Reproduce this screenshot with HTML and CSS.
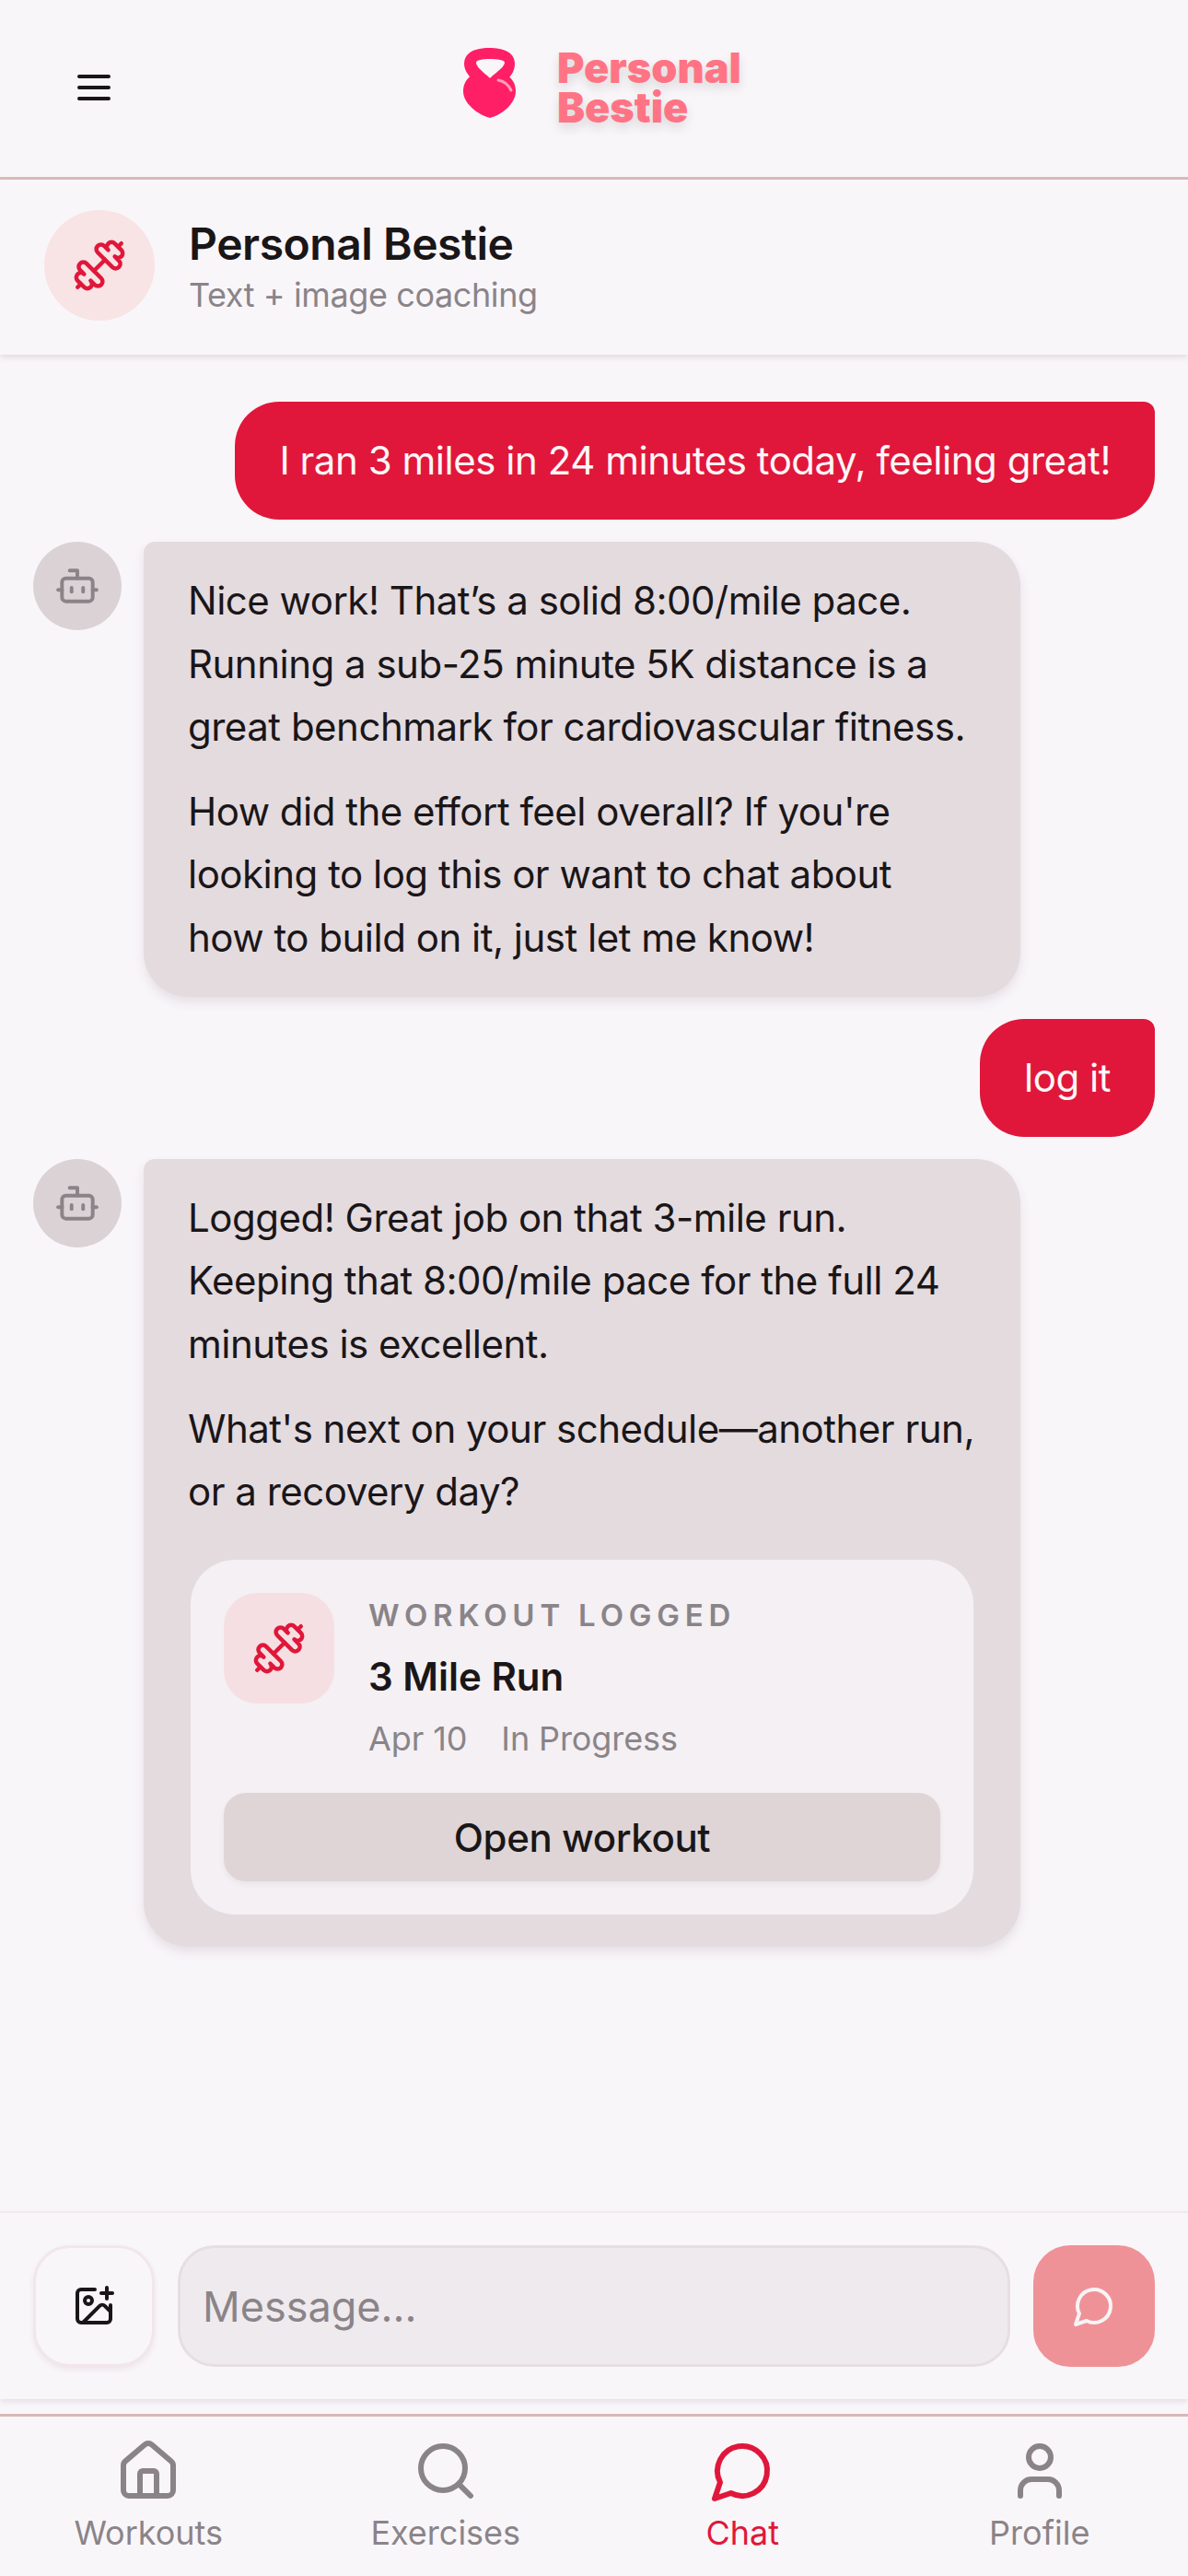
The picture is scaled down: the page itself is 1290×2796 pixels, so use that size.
FILE: index.html
```html
<!DOCTYPE html>
<html lang="en">
<head>
  <meta charset="UTF-8" />
  <meta name="viewport" content="width=device-width, initial-scale=1.0"/>
  <title>Personal Bestie</title>
  <link rel="stylesheet" href="styles.css">
</head>
<body>
  <header class="topbar">
    <svg class="menu-icon" viewBox="0 0 24 24"><path d="M4 6h16M4 12h16M4 18h16"/></svg>
    <div class="logo">
      <svg class="logo-mark" viewBox="0 0 57 76">
        <path fill="#ff1f66" fill-rule="evenodd" d="M28 0C44 0 56 5 56 17C56 24 53 29 49 33L9 33C5 29 1 24 1 17C1 5 13 0 28 0ZM14 16C14 20 21 26 26 30L29 33L32 30C37 26 45 20 45 16C45 13 37 12 29 12C21 12 14 13 14 16Z"/>
        <path fill="#ff1f66" d="M29 33C35 29 41 27 46 29C53 32 57 39 57 47C57 61 41 73 29 76C17 73 0 61 0 47C0 39 4 32 11 29C17 27 23 29 29 33Z"/>
        <path fill="none" stroke="#ff9dbb" stroke-width="3" stroke-linecap="round" d="M38 35C44 36 49 40 52 46"/>
      </svg>
      <div class="logo-text">Personal<br>Bestie</div>
    </div>
  </header>

  <section class="chat-head">
    <div class="head-avatar">
      <svg class="dumbbell" viewBox="0 0 24 24"><path d="M14.4 14.4 9.6 9.6"/><path d="M18.657 21.485a2 2 0 1 1-2.829-2.828l-1.767 1.768a2 2 0 1 1-2.829-2.829l6.364-6.364a2 2 0 1 1 2.829 2.829l-1.768 1.767a2 2 0 1 1 2.828 2.829z"/><path d="m21.5 21.5-1.4-1.4"/><path d="M3.9 3.9 2.5 2.5"/><path d="M6.404 12.768a2 2 0 1 1-2.829-2.829l1.768-1.767a2 2 0 1 1-2.828-2.829l2.828-2.828a2 2 0 1 1 2.829 2.828l1.767-1.768a2 2 0 1 1 2.829 2.829z"/></svg>
    </div>
    <div class="head-text">
      <div class="head-title">Personal Bestie</div>
      <div class="head-sub">Text + image coaching</div>
    </div>
  </section>

  <main class="messages">
    <div class="bubble-user">I ran 3 miles in 24 minutes today, feeling great!</div>

    <div class="bot-row">
      <div class="bot-avatar">
        <svg class="bot-icon" viewBox="0 0 24 24"><path d="M12 8V4H8"/><rect width="16" height="12" x="4" y="8" rx="2"/><path d="M2 14h2"/><path d="M20 14h2"/><path d="M15 13v2"/><path d="M9 13v2"/></svg>
      </div>
      <div class="bubble-bot">
        <p>Nice work! That’s a solid 8:00/mile pace. Running a sub-25 minute 5K distance is a great benchmark for cardiovascular fitness.</p>
        <p>How did the effort feel overall? If you're looking to log this or want to chat about how to build on it, just let me know!</p>
      </div>
    </div>

    <div class="bubble-user">log it</div>

    <div class="bot-row">
      <div class="bot-avatar">
        <svg class="bot-icon" viewBox="0 0 24 24"><path d="M12 8V4H8"/><rect width="16" height="12" x="4" y="8" rx="2"/><path d="M2 14h2"/><path d="M20 14h2"/><path d="M15 13v2"/><path d="M9 13v2"/></svg>
      </div>
      <div class="bubble-bot">
        <p>Logged! Great job on that 3-mile run. Keeping that 8:00/mile pace for the full 24 minutes is excellent.</p>
        <p>What's next on your schedule—another run, or a recovery day?</p>
        <div class="workout-card">
          <div class="workout-top">
            <div class="workout-icon">
              <svg class="dumbbell" viewBox="0 0 24 24"><path d="M14.4 14.4 9.6 9.6"/><path d="M18.657 21.485a2 2 0 1 1-2.829-2.828l-1.767 1.768a2 2 0 1 1-2.829-2.829l6.364-6.364a2 2 0 1 1 2.829 2.829l-1.768 1.767a2 2 0 1 1 2.828 2.829z"/><path d="m21.5 21.5-1.4-1.4"/><path d="M3.9 3.9 2.5 2.5"/><path d="M6.404 12.768a2 2 0 1 1-2.829-2.829l1.768-1.767a2 2 0 1 1-2.828-2.829l2.828-2.828a2 2 0 1 1 2.829 2.828l1.767-1.768a2 2 0 1 1 2.829 2.829z"/></svg>
            </div>
            <div>
              <div class="workout-label">WORKOUT LOGGED</div>
              <div class="workout-name">3 Mile Run</div>
              <div class="workout-meta"><span>Apr 10</span><span>In Progress</span></div>
            </div>
          </div>
          <button class="workout-btn">Open workout</button>
        </div>
      </div>
    </div>
  </main>

  <form class="composer">
    <button type="button" class="attach-btn">
      <svg class="attach-icon" viewBox="0 0 24 24"><path d="M16 5h6"/><path d="M19 2v6"/><path d="M21 11.5V19a2 2 0 0 1-2 2H5a2 2 0 0 1-2-2V5a2 2 0 0 1 2-2h7.5"/><path d="m21 15-3.086-3.086a2 2 0 0 0-2.828 0L6 21"/><circle cx="9" cy="9" r="2"/></svg>
    </button>
    <input class="message-input" type="text" placeholder="Message..." />
    <button type="button" class="send-btn">
      <svg class="send-icon" viewBox="0 0 24 24"><path d="M7.9 20A9 9 0 1 0 4 16.1L2 22Z"/></svg>
    </button>
  </form>

  <nav class="tabbar">
    <div class="tab">
      <svg class="tab-icon" viewBox="0 0 24 24"><path d="M15 21v-8a1 1 0 0 0-1-1h-4a1 1 0 0 0-1 1v8"/><path d="M3 10a2 2 0 0 1 .709-1.528l7-5.999a2 2 0 0 1 2.582 0l7 5.999A2 2 0 0 1 21 10v9a2 2 0 0 1-2 2H5a2 2 0 0 1-2-2z"/></svg>
      <span>Workouts</span>
    </div>
    <div class="tab">
      <svg class="tab-icon" viewBox="0 0 24 24"><circle cx="11" cy="11" r="8"/><path d="m21 21-4.3-4.3"/></svg>
      <span>Exercises</span>
    </div>
    <div class="tab active">
      <svg class="tab-icon" viewBox="0 0 24 24"><path d="M7.9 20A9 9 0 1 0 4 16.1L2 22Z"/></svg>
      <span>Chat</span>
    </div>
    <div class="tab">
      <svg class="tab-icon" viewBox="0 0 24 24"><path d="M19 21v-2a4 4 0 0 0-4-4H9a4 4 0 0 0-4 4v2"/><circle cx="12" cy="7" r="4"/></svg>
      <span>Profile</span>
    </div>
  </nav>
</body>
</html>
```

FILE: styles.css
```css
* {
  box-sizing: border-box;
}

body {
  margin: 0;
  height: 2796px;
  display: flex;
  flex-direction: column;
  overflow: hidden;
  background: #f9f6fa;
  color: #1a1618;
  font-family: Inter, "Liberation Sans", sans-serif;
}

svg {
  display: block;
  fill: none;
  stroke: currentColor;
  stroke-width: 2;
  stroke-linecap: round;
  stroke-linejoin: round;
}

/* top bar */
.topbar {
  height: 195px;
  flex-shrink: 0;
  display: flex;
  align-items: center;
  padding: 0 0 3px 78px;
  border-bottom: 3px solid #dcbbb9;
}

.menu-icon {
  width: 48px;
  height: 48px;
  stroke-width: 2;
}

.logo {
  margin-left: 377px;
  display: flex;
  align-items: center;
  gap: 45px;
}

.logo-mark {
  width: 57px;
  height: 76px;
  margin-bottom: 9px;
  stroke: none;
}

.logo-text {
  margin-top: 1px;
  font-size: 45px;
  font-weight: 900;
  line-height: 43px;
  color: #ff7484;
  text-shadow: 0 6px 12px rgba(0,0,0,0.12);
}

/* chat header */
.chat-head {
  height: 190px;
  flex-shrink: 0;
  display: flex;
  align-items: center;
  gap: 37px;
  padding: 0 0 4px 48px;
  box-shadow: 0 3px 6px rgba(60,30,40,0.12);
  position: relative;
}

.head-avatar {
  width: 120px;
  height: 120px;
  border-radius: 50%;
  background: #f8e3e5;
  display: flex;
  align-items: center;
  justify-content: center;
}

.dumbbell {
  width: 60px;
  height: 60px;
  color: #e0173a;
  stroke-width: 1.8;
  transform: scaleX(-1);
}

.head-text {
  margin-top: 3px;
}

.head-title {
  font-size: 48px;
  font-weight: 600;
  line-height: 60px;
  letter-spacing: -0.47px;
}

.head-sub {
  font-size: 36px;
  line-height: 48px;
  letter-spacing: -0.4px;
  color: #8a8488;
  margin-top: 1px;
}

/* messages */
.messages {
  flex: 1;
  display: flex;
  flex-direction: column;
  gap: 24px;
  padding: 51px 36px 0;
  overflow: hidden;
}

.bubble-user {
  align-self: flex-end;
  background: #e0173a;
  color: #fdf6f7;
  font-size: 42px;
  line-height: 68.25px;
  letter-spacing: -0.47px;
  padding: 30px 48px;
  border-radius: 48px 12px 48px 48px;
}

.bot-row {
  display: flex;
  gap: 24px;
  align-items: flex-start;
}

.bot-avatar {
  width: 96px;
  height: 96px;
  flex-shrink: 0;
  border-radius: 50%;
  background: #dbd2d6;
  display: flex;
  align-items: center;
  justify-content: center;
}

.bot-icon {
  width: 50px;
  height: 50px;
  color: #8a8488;
  stroke-width: 1.9;
}

.bubble-bot {
  width: 952px;
  background: #e4dbdf;
  padding: 30px 48px;
  border-radius: 12px 48px 48px 48px;
  box-shadow: 0 6px 12px rgba(60,30,40,0.1);
  font-size: 42px;
  line-height: 68.25px;
}

.bubble-bot p {
  margin: 0 0 24px;
  letter-spacing: -0.5px;
}

.bubble-bot p:last-of-type {
  margin-bottom: 0;
}

/* workout card */
.workout-card {
  margin: 40px 3px 5px;
  background: #f4f0f4;
  border-radius: 48px;
  padding: 36px;
}

.workout-top {
  display: flex;
  gap: 37px;
}

.workout-icon {
  width: 120px;
  height: 120px;
  flex-shrink: 0;
  border-radius: 36px;
  background: #f6dfe2;
  display: flex;
  align-items: center;
  justify-content: center;
}

.workout-label {
  font-size: 33px;
  font-weight: 600;
  line-height: 48px;
  letter-spacing: 5.8px;
  color: #8a8488;
}

.workout-name {
  font-size: 42px;
  font-weight: 600;
  line-height: 60px;
  margin-top: 13px;
}

.workout-meta {
  display: flex;
  gap: 37px;
  font-size: 36px;
  line-height: 48px;
  letter-spacing: -0.1px;
  color: #8a8488;
  margin-top: 13px;
}

.workout-btn {
  display: block;
  width: 100%;
  height: 96px;
  margin-top: 35px;
  border: none;
  border-radius: 24px;
  background: #dfd5d7;
  color: #1a1618;
  font-family: inherit;
  font-size: 42px;
  font-weight: 500;
  letter-spacing: -0.4px;
  box-shadow: 0 3px 6px rgba(60,30,40,0.06);
}

/* composer */
.composer {
  height: 204px;
  flex-shrink: 0;
  display: flex;
  align-items: center;
  gap: 25px;
  padding: 0 36px;
  border-top: 2px solid #f1e9eb;
  box-shadow: 0 3px 6px rgba(60,30,40,0.1);
}

.attach-btn {
  width: 132px;
  height: 132px;
  flex-shrink: 0;
  border: 3px solid #f1e7ea;
  border-radius: 40px;
  background: #f9f6fa;
  box-shadow: 0 3px 6px rgba(60,30,40,0.08);
  display: flex;
  align-items: center;
  justify-content: center;
  padding: 0;
}

.attach-icon {
  width: 48px;
  height: 48px;
  color: #1a1618;
}

.message-input {
  flex: 1;
  min-width: 0;
  height: 132px;
  border: 3px solid #e6dee2;
  border-radius: 40px;
  background: #efeaee;
  padding: 0 24px;
  font-family: inherit;
  font-size: 45px;
}

.message-input::placeholder {
  color: #8a8488;
  opacity: 1;
}

.send-btn {
  width: 132px;
  height: 132px;
  flex-shrink: 0;
  border: none;
  border-radius: 40px;
  background: #ef9297;
  display: flex;
  align-items: center;
  justify-content: center;
  padding: 0;
}

.send-icon {
  width: 48px;
  height: 48px;
  color: #f8f4f6;
}

/* bottom nav */
.tabbar {
  margin-top: 16px;
  height: 176px;
  flex-shrink: 0;
  display: grid;
  grid-template-columns: repeat(4, 1fr);
  border-top: 3px solid #d8b8b8;
  padding-top: 23px;
}

.tab {
  display: flex;
  flex-direction: column;
  align-items: center;
  font-size: 36px;
  line-height: 48px;
  color: #8a8488;
}

.tab.active {
  color: #e0173a;
}

.tab-icon {
  width: 72px;
  height: 72px;
  margin-bottom: 7px;
}
```
